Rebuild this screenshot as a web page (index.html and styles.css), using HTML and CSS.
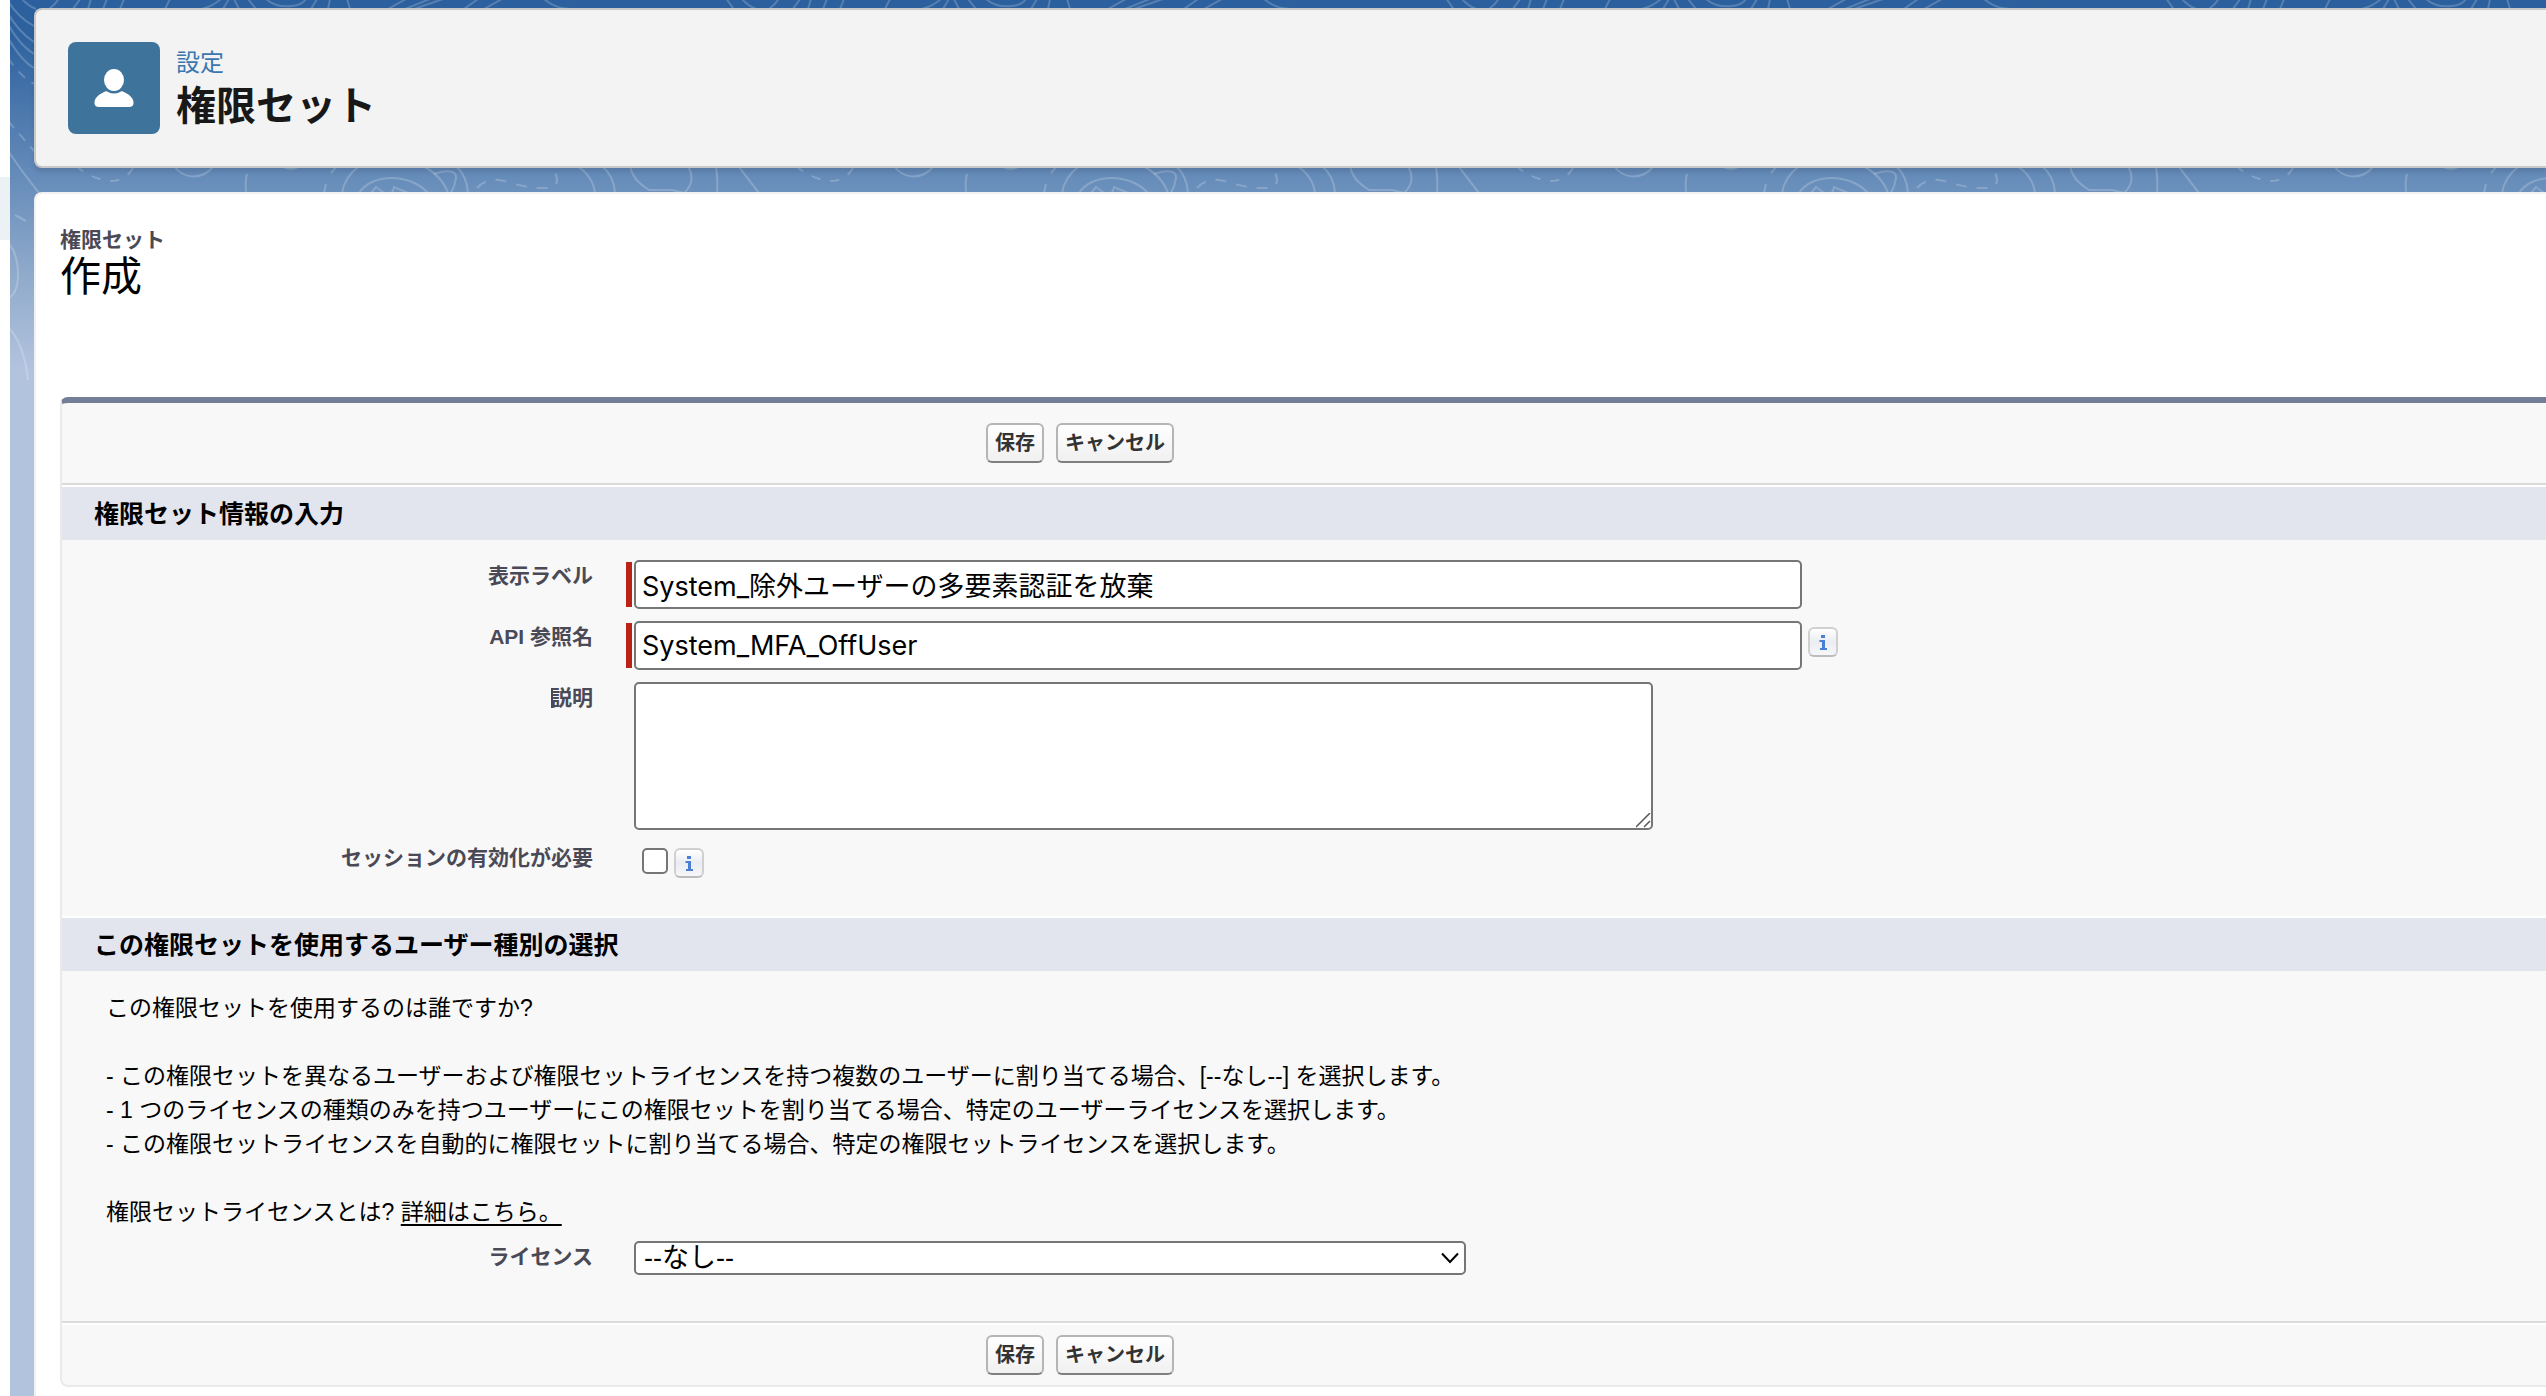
FILE: index.html
```html
<!DOCTYPE html>
<html lang="ja">
<head>
<meta charset="utf-8">
<meta name="viewport" content="width=device-width, initial-scale=1">
<title>権限セット</title>
<link rel="stylesheet" href="styles.css">
</head>
<body>
<div class="shell">
  <aside class="nav"><div class="nav-current"></div></aside>
  <div class="stage">
    <svg class="contours" aria-hidden="true" width="100%" height="400">
      <defs>
        <pattern id="contour" x="-100" y="0" width="720" height="400" patternUnits="userSpaceOnUse">
          <g transform="translate(-630 0)" fill="none" stroke="#fff" stroke-opacity=".2" stroke-width="2">
            <path d="M630 166C632 178 640 184 649 190L672 190 684 193C692 186 694 176 688 166M716 166Q718 180 717 194"/>
            <path d="M894 166C903 178 920 182 934 166M1003 167Q1010 171 1018 167M967 174Q965 180 966 192M1044 193L1046 184M1051 173L1057 166"/>
            <path d="M1062 193Q1064 178 1079 166M1143 166Q1162 176 1168 193M1079 193C1092 173 1130 173 1148 193M1091 193L1096 187 1104 193M1112 193L1114 187 1128 193"/>
            <path d="M1154 174C1166 170 1177 170 1176 178Q1175 186 1171 193M1176 166Q1187 176 1188 193M1297 166Q1313 176 1315 193M1322 166Q1334 176 1335 193"/>
            <path stroke-dasharray="9 10" d="M796 166C806 174 818 181 833 181Q846 180 853 168"/>
            <path stroke-dasharray="11 10" d="M1197 188C1206 178 1218 178 1230 183L1252 188 1272 188Q1282 182 1272 168"/>
            <path d="M726 -2Q738 18 754 26M726 10Q738 32 754 42M726 20Q738 44 754 54M726 34Q740 60 754 68M741 -2Q748 6 756 9M769 9Q776 4 779 -2"/>
            <path stroke-dasharray="9 8" d="M728 58Q740 76 754 84M728 121L755 152"/>
            <path d="M726 148Q742 172 759 193M735 215L746 221M729 244C740 256 742 290 729 298M729 328Q744 344 748 380"/>
            <path d="M800 -1L793 9M811 -1L808 9M827 -1L823 9M844 -1L840 9M890 -1L885 9M941 -1Q933 6 922 9M949 -1L943 9M954 -1L959 9M968 -1L976 9M986 -1Q996 8 1012 6 1022 5 1026 -1M1037 -1L1031 9M1050 -1L1048 9M1067 -1L1070 9M1126 -1L1108 9M1150 -1L1125 9M1163 -1L1134 9M1198 -1L1184 9M1222 -1L1204 9M1264 -1Q1274 8 1290 9"/>
          </g>
        </pattern>
      </defs>
      <rect width="100%" height="400" fill="url(#contour)"/>
    </svg>

    <header class="page-header">
      <svg class="header-icon" viewBox="0 0 92 92" role="img" aria-label="ユーザー">
        <rect width="92" height="92" rx="8" fill="#3e739b"/>
        <ellipse cx="46" cy="38" rx="10" ry="11" fill="#fff"/>
        <path fill="#fff" d="M37 49.500Q39 49 40 50Q46 53 52 50Q53 49 55 49.500C60 52 65 55 65.500 60V61Q65.500 65 61 65H31Q26.500 65 26.500 61V60C27 55 32 52 37 49.500Z"/>
      </svg>
      <div>
        <p class="eyebrow">設定</p>
        <h1 class="title">権限セット</h1>
      </div>
    </header>

    <main class="content">
      <p class="crumb">権限セット</p>
      <h2 class="page-type">作成</h2>

      <form class="block">
        <div class="actions">
          <button type="button" class="btn">保存</button>
          <button type="button" class="btn">キャンセル</button>
        </div>

        <h3 class="section">権限セット情報の入力</h3>
        <div class="fields">
          <label class="label" for="label">表示ラベル</label>
          <div class="field required"><input class="text" id="label" type="text" value="System_除外ユーザーの多要素認証を放棄"></div>

          <label class="label" for="api">API 参照名</label>
          <div class="field required"><input class="text" id="api" type="text" value="System_MFA_OffUser">
            <button type="button" class="info" aria-label="情報"><svg viewBox="0 0 30 30"><path d="M13 8h4v3h-4zM11.500 13h5.500v8h2v2h-7v-2h2v-6h-2.500z"/></svg></button></div>

          <label class="label caret" for="desc">説明</label>
          <div class="field"><textarea class="area" id="desc"></textarea></div>

          <label class="label" for="session">セッションの有効化が必要</label>
          <div class="field check"><input class="box" id="session" type="checkbox">
            <button type="button" class="info" aria-label="情報"><svg viewBox="0 0 30 30"><path d="M13 8h4v3h-4zM11.500 13h5.500v8h2v2h-7v-2h2v-6h-2.500z"/></svg></button></div>
        </div>

        <h3 class="section">この権限セットを使用するユーザー種別の選択</h3>
        <div class="help">
          <p>この権限セットを使用するのは誰ですか?</p>
          <ul class="choices">
            <li>- この権限セットを異なるユーザーおよび権限セットライセンスを持つ複数のユーザーに割り当てる場合、[--なし--] を選択します。</li>
            <li>- 1 つのライセンスの種類のみを持つユーザーにこの権限セットを割り当てる場合、特定のユーザーライセンスを選択します。</li>
            <li>- この権限セットライセンスを自動的に権限セットに割り当てる場合、特定の権限セットライセンスを選択します。</li>
          </ul>
          <p>権限セットライセンスとは? <a class="link" href="#">詳細はこちら。</a></p>
        </div>
        <div class="fields license">
          <label class="label" for="license">ライセンス</label>
          <div class="field select-wrap">
            <select class="select" id="license"><option>--なし--</option></select>
            <svg class="chevron" viewBox="0 0 18 12" aria-hidden="true"><path d="M1 1.500L9 10L17 1.500" fill="none" stroke="#000" stroke-width="2"/></svg>
          </div>
        </div>

        <div class="actions bottom">
          <button type="button" class="btn">保存</button>
          <button type="button" class="btn">キャンセル</button>
        </div>
      </form>
    </main>
  </div>
</div>
</body>
</html>
```
FILE: styles.css
```css
* { box-sizing: border-box; }

body {
  margin: 0;
  background: #fff;
  color: #000;
  font-family: "Liberation Sans", "Noto Sans CJK JP", sans-serif;
  font-size: 23px;
  line-height: 34px;
}

h1, h2, h3, p, ul { margin: 0; padding: 0; }

.shell {
  display: flex;
  min-height: 100vh;
}

.nav {
  flex: 0 0 10px;
  padding-top: 177px;
}

.nav-current {
  height: 63px;
  background: #ebf1f5;
}

.stage {
  position: relative;
  flex: 1;
  min-width: 0;
  padding: 8px 0 0 24px;
  display: flex;
  flex-direction: column;
  gap: 24px;
  background: #b2c3de linear-gradient(#2b5f9d 0, #2f639f 40px, #4170a8 85px, #6b90bc 190px, #8ea9ca 270px, #b2c3de 370px) no-repeat 0 0 / 100% 400px;
}

.contours {
  position: absolute;
  left: 0;
  top: 0;
}

.page-header {
  position: relative;
  display: flex;
  align-items: flex-start;
  gap: 16px;
  height: 160px;
  padding: 32px;
  border: 2px solid #c9c9c9;
  border-right: 0;
  border-radius: 8px 0 0 8px;
  background: #f3f3f3;
  box-shadow: 0 4px 4px rgba(0, 0, 0, .1);
}

.header-icon {
  width: 92px;
  height: 92px;
}

.eyebrow {
  margin-top: 3px;
  color: #3a77b0;
  font-size: 24px;
  line-height: 36px;
}

.title {
  color: #181818;
  font-size: 40px;
  line-height: 50px;
}

.content {
  position: relative;
  flex: 1;
  padding: 32px 0 8px 24px;
  border: 2px solid #f1f1f1;
  border-width: 2px 0 0 2px;
  border-radius: 8px 0 0 0;
  background: #fff;
}

.crumb {
  color: #4a4a56;
  font-size: 21px;
  font-weight: 700;
  line-height: 28px;
}

.page-type {
  font-size: 41px;
  font-weight: 400;
  line-height: 46px;
}

.block {
  margin-top: 97px;
  border: 2px solid #eaeaea;
  border-right: 0;
  border-top: 6px solid #747e96;
  border-radius: 8px 0 0 8px;
  background: #f8f8f8;
}

.actions {
  display: flex;
  gap: 12px;
  height: 82px;
  padding: 20px 0 0 924px;
  border-bottom: 2px solid #dbdbdb;
}

.actions.bottom {
  height: 64px;
  padding-top: 12px;
  border-top: 2px solid #dbdbdb;
  border-bottom: 0;
  box-shadow: inset 0 2px #fff;
}

.btn {
  height: 40px;
  padding: 1px 7px 0;
  border: 2px solid #b5b5b5;
  border-bottom-color: #7f7f7f;
  border-radius: 6px;
  background: linear-gradient(#fff, #f0f0f0);
  color: #333;
  font: 700 20px/35px "Liberation Sans", "Noto Sans CJK JP", sans-serif;
}

.section {
  height: 55px;
  padding-left: 32px;
  border-top: 2px solid #fff;
  background: #e3e5ee;
  font-size: 25px;
  line-height: 55px;
}

.fields {
  display: grid;
  grid-template-columns: 531px 1fr;
  row-gap: 12px;
  column-gap: 33px;
  padding: 20px 0 38px;
}

.label {
  color: #4a4a56;
  font-size: 21px;
  font-weight: 700;
  line-height: 32px;
  text-align: right;
}

.caret::before {
  content: "";
  display: inline-block;
  width: 2px;
  height: 20px;
  margin-right: -2px;
  vertical-align: -3px;
  background: #4a4a56;
}

.field {
  display: flex;
  gap: 6px;
  padding-left: 8px;
}

.required { padding-left: 0; }

.required::before {
  content: "";
  width: 6px;
  margin: 2px -4px 2px 0;
  background: #ba2318;
}

.text, .area, .select {
  border: 2px solid #767676;
  border-radius: 5px;
  background: #fff;
  color: #000;
  font: 27px/34px Inter, "Noto Sans CJK JP", sans-serif;
}

.text {
  flex: 0 1 1168px;
  min-width: 0;
  height: 49px;
  padding: 0 6px 1px;
}

.area {
  display: block;
  width: 1019px;
  max-width: 100%;
  height: 148px;
  padding: 4px;
}

.area::-webkit-resizer {
  background: url("data:image/svg+xml,%3Csvg xmlns='http://www.w3.org/2000/svg' viewBox='0 0 15 15'%3E%3Cpath d='M0 14L14 0M8 14L14 8' stroke='%23555' stroke-width='1.500'/%3E%3C/svg%3E") no-repeat 0 0 / 15px 15px;
}

.info {
  width: 30px;
  height: 30px;
  margin-top: 6px;
  padding: 0;
  border: 2px solid #d0d0d0;
  border-bottom-color: #bcbcbc;
  border-radius: 6px;
  background: linear-gradient(#fff, #ebecf2 50%, #f7f7f9);
}

.info svg {
  display: block;
  width: 30px;
  height: 30px;
  margin: -2px;
  fill: #4a7fd4;
}

.check {
  padding: 6px 0 0 16px;
}

.check .info { margin-top: 0; }

.box {
  appearance: none;
  width: 26px;
  height: 26px;
  margin: 0;
  border: 2px solid #767676;
  border-radius: 5px;
  background: #fff;
}

.help {
  padding: 20px 44px 12px;
}

.choices {
  margin: 34px 0;
  list-style: none;
}

.link {
  color: inherit;
  text-decoration-thickness: 2px;
  text-underline-offset: 4px;
}

.license {
  padding: 0 0 46px;
}

.select-wrap {
  position: relative;
  width: 840px;
}

.select {
  appearance: none;
  width: 100%;
  height: 34px;
  padding: 0 8px;
  font-family: "Liberation Sans", "Noto Sans CJK JP", sans-serif;
  line-height: 30px;
}

.chevron {
  position: absolute;
  right: 7px;
  top: 11px;
  width: 18px;
  height: 12px;
}
```
